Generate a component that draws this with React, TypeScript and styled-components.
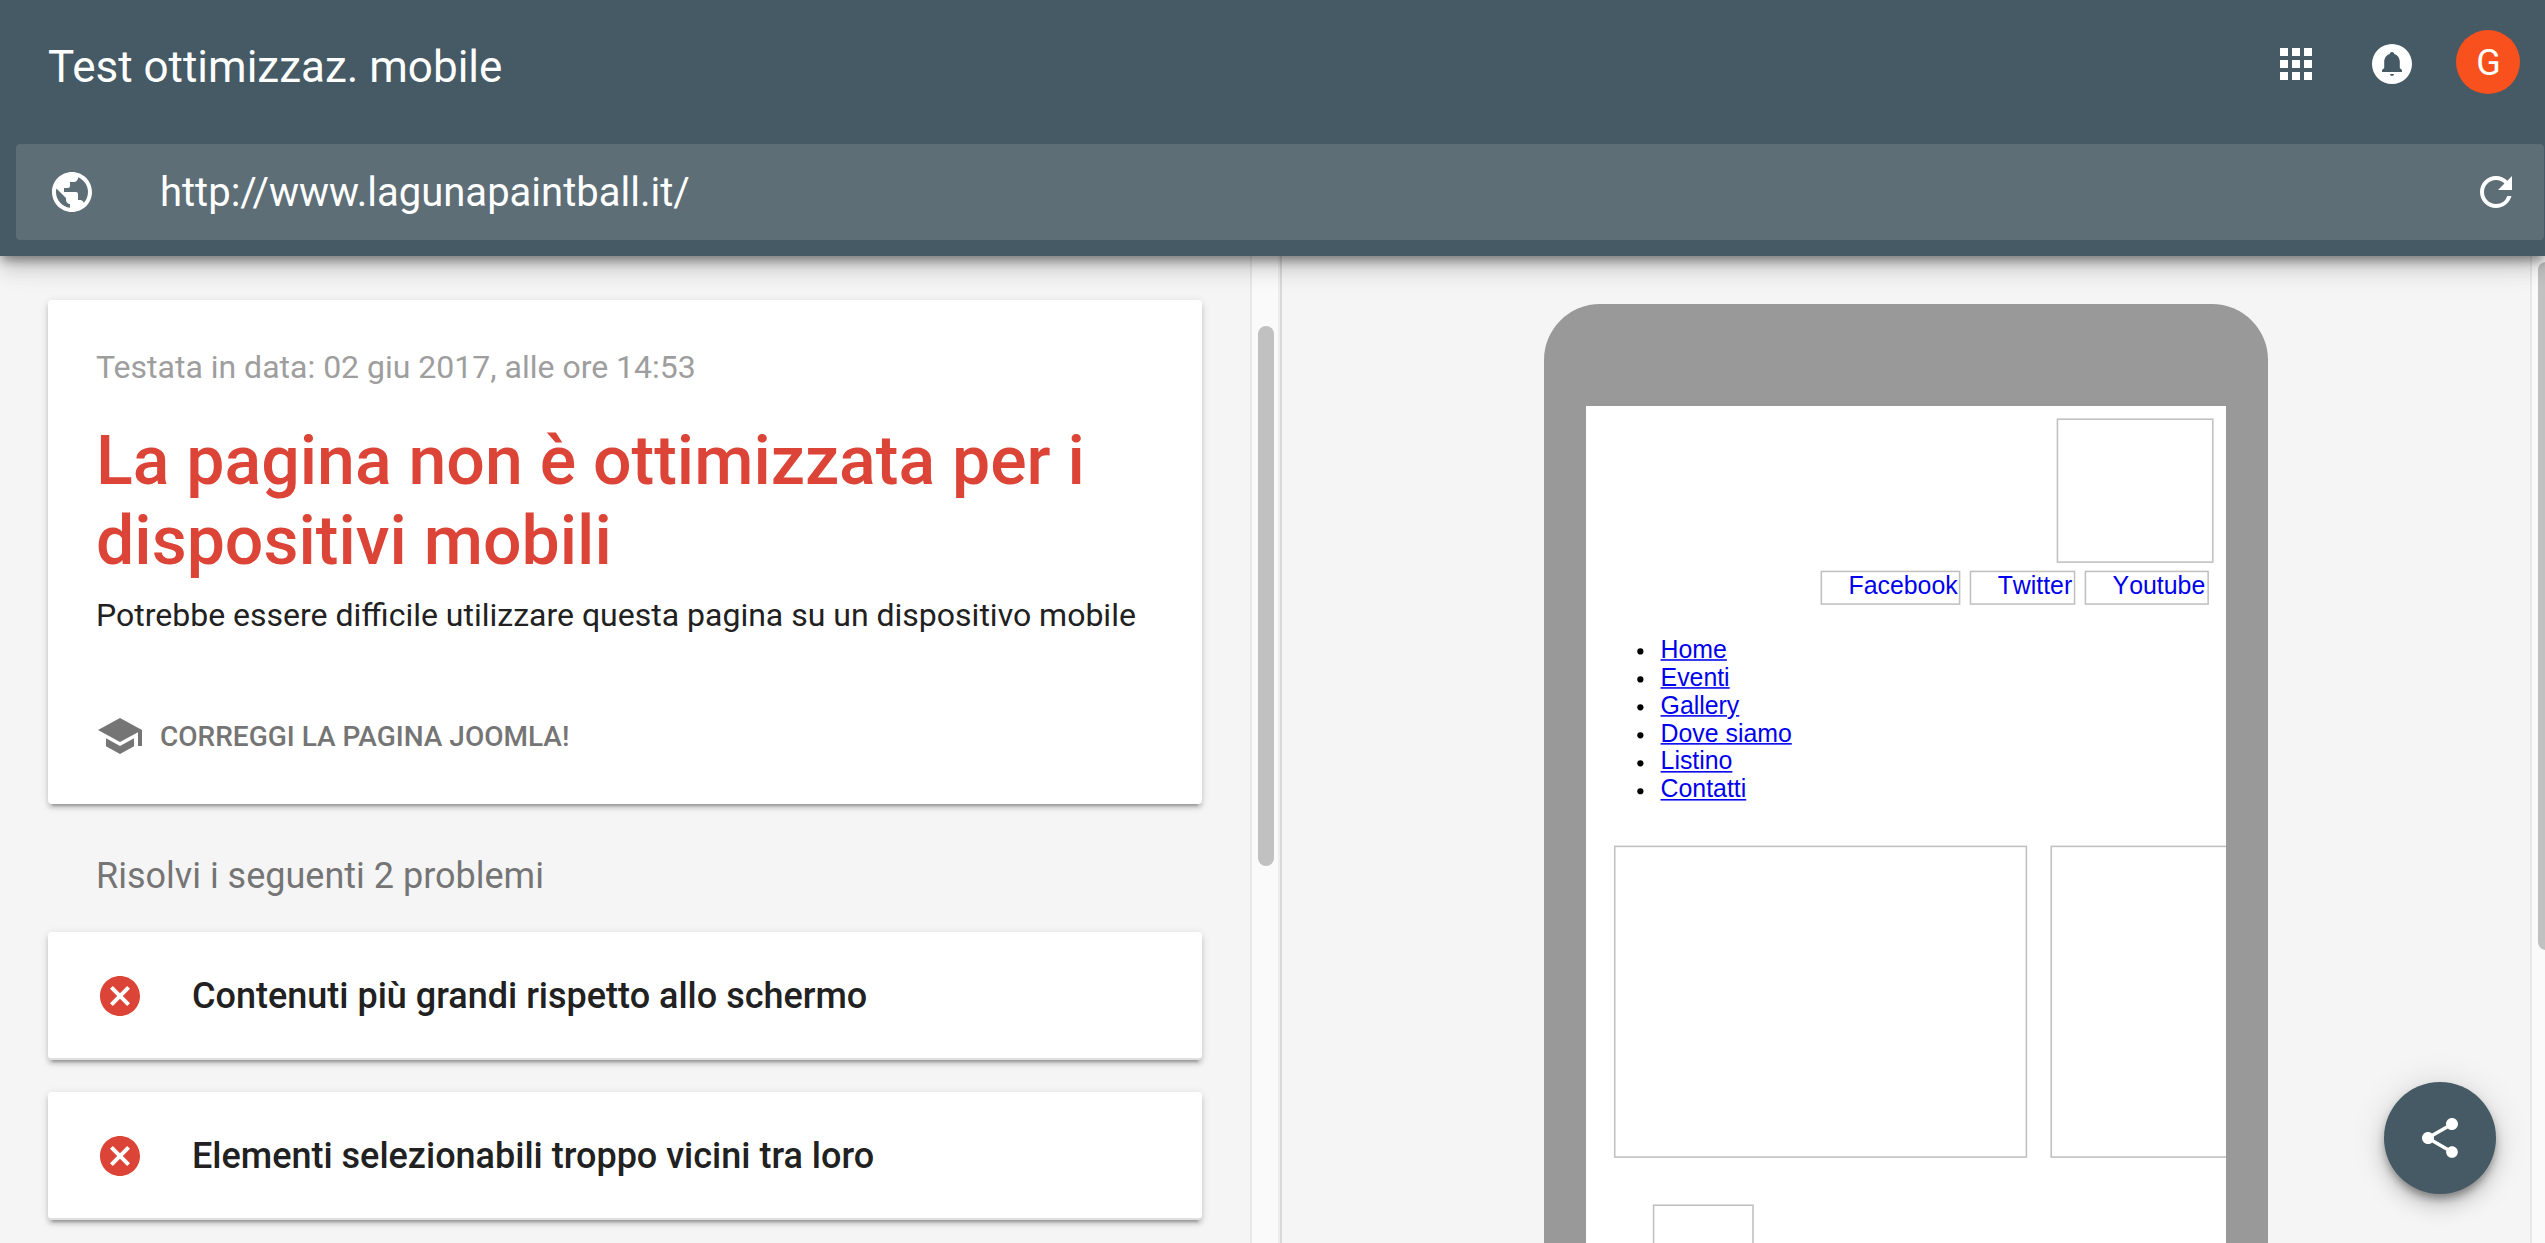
import React from "react";
import styled, { createGlobalStyle } from "styled-components";
import { MdApps, MdPublic, MdRefresh, MdSchool, MdCancel, MdShare } from "react-icons/md";

const GlobalStyle = createGlobalStyle`
  * { box-sizing: border-box; }
  body {
    margin: 0;
    overflow: hidden;
    background: #f5f5f5;
    font-family: Roboto, "Liberation Sans", sans-serif;
  }
`;

const Page = styled.div`
  display: flex;
  flex-direction: column;
  height: 1243px;
  overflow: hidden;
  background: #f5f5f5;
`;

const Header = styled.header`
  position: relative;
  z-index: 2;
  flex: none;
  height: 256px;
  background: #455a64;
  color: #fff;
  box-shadow: 0 12px 20px 0 rgba(0, 0, 0, 0.14), 0 2px 36px 0 rgba(0, 0, 0, 0.12),
    0 6px 10px -2px rgba(0, 0, 0, 0.4);
`;

const TopBar = styled.div`
  display: flex;
  align-items: center;
  height: 128px;
  padding: 0 25px 0 48px;
`;

const AppTitle = styled.h1`
  flex: 1;
  margin: 0;
  padding-top: 6px;
  font-size: 44px;
  font-weight: 400;
  line-height: 56px;
`;

const IconBox = styled.span<{ $gap: number }>`
  display: flex;
  margin-right: ${(p) => p.$gap}px;
`;

const Avatar = styled.div`
  display: flex;
  align-items: center;
  justify-content: center;
  width: 64px;
  height: 64px;
  margin-top: -4px;
  padding-top: 2px;
  padding-left: 1px;
  border-radius: 50%;
  background: #f8511d;
  font-size: 36px;
`;

const UrlBar = styled.div`
  display: flex;
  align-items: center;
  height: 96px;
  margin: 16px 1px 0 16px;
  padding: 0 24px 0 32px;
  border-radius: 4px;
  background: #5d6e77;
`;

const UrlText = styled.span`
  flex: 1;
  padding: 2px 0 0 64px;
  font-size: 40px;
  line-height: 48px;
`;

const Body = styled.main`
  display: flex;
  flex: 1;
  min-height: 0;
`;

const ResultPane = styled.section`
  width: 1250px;
  padding: 44px 48px 0;
`;

const Track = styled.div<{ $width: number; $top: number }>`
  flex: none;
  width: ${(p) => p.$width}px;
  padding: ${(p) => p.$top}px 0 0 6px;
  overflow: hidden;
  border-left: 2px solid #e8e8e8;
  background: #fafafa;
`;

const Divider = styled.div`
  width: 4px;
  border-left: 2px solid #ededed;
  background: #d9d9d9;
`;

const Thumb = styled.div<{ $height: number }>`
  width: 16px;
  height: ${(p) => p.$height}px;
  border-radius: 8px;
  background: #c1c1c1;
`;

const Card = styled.article`
  border-radius: 4px;
  background: #fff;
  box-shadow: 0 4px 4px 0 rgba(0, 0, 0, 0.14), 0 2px 10px 0 rgba(0, 0, 0, 0.12),
    0 6px 2px -4px rgba(0, 0, 0, 0.2);
`;

const SummaryCard = styled(Card)`
  height: 504px;
  padding: 43px 48px 0;
`;

const TestDate = styled.p`
  margin: 0;
  color: #9e9e9e;
  font-size: 32px;
  line-height: 48px;
`;

const Verdict = styled.h2`
  margin: 30px 0 0;
  color: #db4437;
  font-size: 68px;
  font-weight: 500;
  line-height: 80px;
`;

const Detail = styled.p`
  margin: 10px 0 0;
  color: #212121;
  font-size: 32px;
  line-height: 48px;
  white-space: nowrap;
`;

const FixLink = styled.div`
  display: flex;
  align-items: center;
  gap: 16px;
  margin-top: 73px;
  color: #757575;
  font-size: 28px;
  font-weight: 500;
  line-height: 47px;
`;

const FixLabel = styled.span`
  padding-top: 1px;
`;

const SectionTitle = styled.h3`
  margin: 44px 0 0 48px;
  color: #757575;
  font-size: 36px;
  font-weight: 400;
  line-height: 56px;
`;

const IssueList = styled.div`
  display: flex;
  flex-direction: column;
  gap: 32px;
  margin-top: 28px;
`;

const IssueCard = styled(Card)`
  display: flex;
  align-items: center;
  gap: 48px;
  height: 128px;
  padding: 2px 48px 0;
  border-bottom: 2px solid #e0e0e0;
  color: #212121;
  font-size: 36px;
  font-weight: 500;
`;

const PreviewPane = styled.section`
  display: flex;
  flex: 1;
  justify-content: center;
  padding-top: 48px;
`;

const Phone = styled.div`
  width: 724px;
  height: 1300px;
  padding: 102px 42px 0;
  border-radius: 56px;
  background: #999;
`;

const Screen = styled.div`
  width: 640px;
  height: 1138px;
  overflow: hidden;
  background: #fff;
`;

/* The previewed site is laid out at its native 412px width, then enlarged to fill the screen. */
const MiniPage = styled.div`
  width: 412px;
  height: 732px;
  padding: 8px;
  overflow: hidden;
  transform: scale(1.5534);
  transform-origin: 0 0;
  color: #000;
  font-family: "Liberation Sans", Arial, sans-serif;
  font-size: 16px;
  font-kerning: none;
  line-height: 18px;
`;

const ImageBox = styled.div<{ $width: number; $height: number }>`
  flex: none;
  width: ${(p) => p.$width}px;
  height: ${(p) => p.$height}px;
  border: 1px solid #c0c0c0;
`;

const LogoRow = styled.div`
  display: flex;
  justify-content: flex-end;
`;

const SocialRow = styled.div`
  display: flex;
  gap: 6px;
  margin: 5px 0 0 143px;
`;

const SocialLink = styled.a<{ $width: number }>`
  width: ${(p) => p.$width}px;
  height: 22px;
  padding-left: 17px;
  border: 1px solid #c0c0c0;
  color: #00e;
  line-height: 17px;
`;

const Menu = styled.ul`
  margin: 20px 0 27px;
  padding-left: 25px;
  list-style: none;
`;

const MenuItem = styled.li`
  display: flex;
  align-items: center;
  gap: 11px;

  &::before {
    content: "";
    width: 4px;
    height: 4px;
    margin-top: 2px;
    border-radius: 50%;
    background: #000;
  }
`;

const MenuLink = styled.span`
  color: #00e;
  text-decoration: underline;
`;

const Gallery = styled.div`
  display: flex;
  gap: 15px;
  margin-left: 10px;
`;

const Footer = styled.div`
  margin: 30px 0 0 35px;
`;

const ShareButton = styled.button`
  position: absolute;
  z-index: 3;
  left: 2384px;
  top: 1082px;
  display: flex;
  align-items: center;
  justify-content: center;
  width: 112px;
  height: 112px;
  padding: 0;
  border: 0;
  border-radius: 50%;
  background: #455a64;
  color: #fff;
  box-shadow: 0 12px 20px 0 rgba(0, 0, 0, 0.14), 0 2px 36px 0 rgba(0, 0, 0, 0.12),
    0 6px 10px -2px rgba(0, 0, 0, 0.4);
`;

const BellIcon = () => (
  <svg width="48" height="48" viewBox="0 0 24 24" fill="currentColor">
    <path
      fillRule="evenodd"
      d="M12 2a10 10 0 1 0 0 20 10 10 0 0 0 0-20zM7 16v-1l1.1-1v-3.1c0-1.9 1.1-3.5 2.8-3.95V6.9c0-.5.5-.9 1.1-.9s1.1.4 1.1.9v.05c1.7.45 2.8 2.05 2.8 3.95V14l1.1 1v1zM11 17h2c0 .6-.45 1-1 1s-1-.4-1-1z"
    />
  </svg>
);

const issues = ["Contenuti più grandi rispetto allo schermo", "Elementi selezionabili troppo vicini tra loro"];

const socials = [
  { label: "Facebook", width: 90 },
  { label: "Twitter", width: 68 },
  { label: "Youtube", width: 80 },
];

const menu = ["Home", "Eventi", "Gallery", "Dove siamo", "Listino", "Contatti"];

export default function App() {
  return (
    <Page>
      <GlobalStyle />
      <Header>
        <TopBar>
          <AppTitle>Test ottimizzaz. mobile</AppTitle>
          <IconBox $gap={48}>
            <MdApps size={48} />
          </IconBox>
          <IconBox $gap={40}>
            <BellIcon />
          </IconBox>
          <Avatar>G</Avatar>
        </TopBar>
        <UrlBar>
          <MdPublic size={48} />
          <UrlText>http://www.lagunapaintball.it/</UrlText>
          <MdRefresh size={48} />
        </UrlBar>
      </Header>
      <Body>
        <ResultPane>
          <SummaryCard>
            <TestDate>Testata in data: 02 giu 2017, alle ore 14:53</TestDate>
            <Verdict>La pagina non è ottimizzata per i dispositivi mobili</Verdict>
            <Detail>Potrebbe essere difficile utilizzare questa pagina su un dispositivo mobile</Detail>
            <FixLink>
              <MdSchool size={48} />
              <FixLabel>CORREGGI LA PAGINA JOOMLA!</FixLabel>
            </FixLink>
          </SummaryCard>
          <SectionTitle>Risolvi i seguenti 2 problemi</SectionTitle>
          <IssueList>
            {issues.map((issue) => (
              <IssueCard key={issue}>
                <MdCancel size={48} color="#db4437" />
                {issue}
              </IssueCard>
            ))}
          </IssueList>
        </ResultPane>
        <Track $width={28} $top={70}>
          <Thumb $height={540} />
        </Track>
        <Divider />
        <PreviewPane>
          <Phone>
            <Screen>
              <MiniPage>
                <LogoRow>
                  <ImageBox $width={101} $height={93} />
                </LogoRow>
                <SocialRow>
                  {socials.map((s) => (
                    <SocialLink key={s.label} $width={s.width}>
                      {s.label}
                    </SocialLink>
                  ))}
                </SocialRow>
                <Menu>
                  {menu.map((item) => (
                    <MenuItem key={item}>
                      <MenuLink>{item}</MenuLink>
                    </MenuItem>
                  ))}
                </Menu>
                <Gallery>
                  <ImageBox $width={266} $height={201} />
                  <ImageBox $width={266} $height={201} />
                </Gallery>
                <Footer>
                  <ImageBox $width={65} $height={100} />
                </Footer>
              </MiniPage>
            </Screen>
          </Phone>
        </PreviewPane>
        <Track $width={15} $top={6}>
          <Thumb $height={688} />
        </Track>
      </Body>
      <ShareButton aria-label="Condividi">
        <MdShare size={48} />
      </ShareButton>
    </Page>
  );
}
